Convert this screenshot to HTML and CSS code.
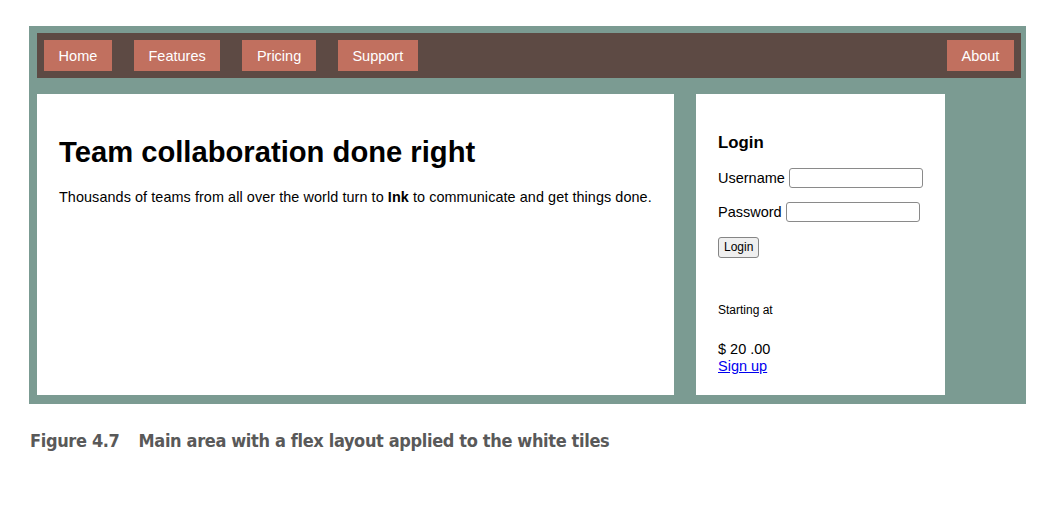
FILE: index.html
```html
<!DOCTYPE html>
<html>
<head>
<meta charset="utf-8">
<link rel="stylesheet" href="styles.css">
</head>
<body>
<div class="frame">
  <nav class="nav">
    <a class="nav-btn">Home</a>
    <a class="nav-btn">Features</a>
    <a class="nav-btn">Pricing</a>
    <a class="nav-btn">Support</a>
    <a class="nav-btn nav-right">About</a>
  </nav>
  <div class="main">
    <section class="tile tile-hero">
      <h1 class="hero-title">Team collaboration done right</h1>
      <p class="hero-text">Thousands of teams from all over the world turn to <b>Ink</b> to communicate and get things done.</p>
    </section>
    <aside class="tile tile-login">
      <h3 class="login-title">Login</h3>
      <p class="field"><label>Username</label> <input class="input input-user" type="text"></p>
      <p class="field field-pass"><label>Password</label> <input class="input input-pass" type="password"></p>
      <p class="field"><button class="btn">Login</button></p>
      <p class="starting">Starting at</p>
      <p class="price">$ 20 .00<br><a class="signup" href="#">Sign up</a></p>
    </aside>
  </div>
</div>
<p class="caption"><span class="fig">Figure 4.7</span>Main area with a flex layout applied to the white tiles</p>
</body>
</html>
```

FILE: styles.css
```css
html, body {
  margin: 0;
  padding: 0;
  background: #ffffff;
}
body {
  font-family: "Liberation Sans", Arial, sans-serif;
  font-size: 14.5px;
  color: #000;
}
.frame {
  margin: 26px 0 0 29px;
  width: 997px;
  height: 378px;
  box-sizing: border-box;
  background: #7b9b92;
  padding: 7px 5px 9px 8px;
  display: flex;
  flex-direction: column;
  gap: 16px;
}
.nav {
  height: 45px;
  background: #5d4a44;
  display: flex;
  align-items: center;
  padding: 0 7px;
  gap: 22px;
}
.nav-btn {
  height: 31px;
  display: flex;
  align-items: center;
  padding: 0 14.6px;
  background: #c1705f;
  color: #fff;
  font-size: 14.5px;
}
.nav-right {
  margin-left: auto;
}
.main {
  flex: 1;
  display: flex;
  gap: 22px;
}
.tile {
  background: #fff;
  box-sizing: border-box;
  padding: 20px 22px;
}
.tile-hero {
  width: 637px;
}
.tile-login {
  width: 249px;
  padding-top: 21px;
}
.hero-title {
  font-size: 29.2px;
  font-weight: bold;
  margin: 22px 0 20px;
}
.hero-text {
  margin: 0;
  font-size: 14.4px;
  letter-spacing: 0.08px;
  white-space: nowrap;
}
.login-title {
  font-size: 16.8px;
  margin: 18px 0 15px;
}
.field {
  margin: 0 0 14px;
  display: flex;
  align-items: center;
  height: 20px;
  font-size: 14.5px;
}
.field-pass {
  margin-bottom: 15px;
}
.field label {
  margin-right: 4px;
}
.input {
  box-sizing: border-box;
  width: 134px;
  height: 20px;
  border: 1px solid #8a8a8a;
  border-radius: 3px;
  padding: 0 2px;
  background: #fff;
}
.btn {
  box-sizing: border-box;
  height: 21px;
  padding: 0 5px;
  font-family: "Liberation Sans", Arial, sans-serif;
  font-size: 12px;
  color: #000;
  background: #efefef;
  border: 1px solid #858585;
  border-radius: 3px;
}
.starting {
  margin: 46px 0 0;
  font-size: 12px;
  line-height: 14px;
}
.price {
  margin: 24px 0 0;
  font-size: 14.5px;
  line-height: 17px;
}
.signup {
  color: #0000ee;
  text-decoration: underline;
}
.caption {
  margin: 26px 0 0 30px;
  font-family: "Liberation Sans Narrow", "DejaVu Sans Condensed", "Liberation Sans", sans-serif;
  font-weight: bold;
  font-size: 18px;
  letter-spacing: -0.35px;
  color: #595959;
}
.fig {
  margin-right: 19px;
}
```
